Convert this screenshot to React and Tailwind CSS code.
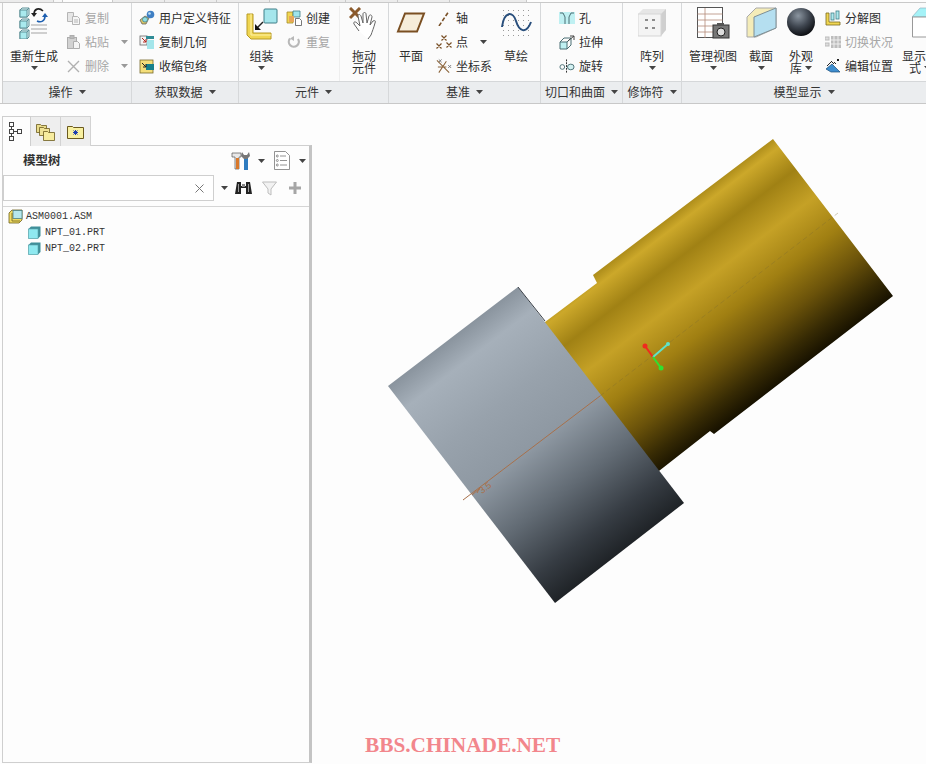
import React from 'react'

const cjk = "font-['Noto_Sans_CJK_SC','Liberation_Sans',sans-serif]"

function Caret({ color = '#444' }) {
  return (
    <svg width="7" height="4" viewBox="0 0 7 4" className="shrink-0">
      <path d="M0 0h7L3.5 4z" fill={color} />
    </svg>
  )
}

function Cube({ x = 0, y = 0, s = 9, front = '#a9eaee', edge = '#5c8f96' }) {
  const d = Math.round(s * 0.3)
  return (
    <g transform={`translate(${x} ${y})`}>
      <path d={`M${d} 0H${s + d}V${s}L${s} ${s + d}H0V${d}z`} fill="#dff7f8" stroke={edge} strokeWidth="1" />
      <rect x="0" y={d} width={s} height={s} fill={front} stroke={edge} strokeWidth="1" />
      <path d={`M${s} ${d}L${s + d} 0`} stroke={edge} strokeWidth="1" />
    </g>
  )
}

function RegenIcon() {
  return (
    <svg width="30" height="32" viewBox="0 0 30 32">
      <Cube x={1} y={1} s={7} />
      <Cube x={1} y={12} s={7} />
      <Cube x={1} y={23} s={7} />
      <path d="M24 4C20 0 15 2 15 7" fill="none" stroke="#222" strokeWidth="1.6" />
      <path d="M12 6h6l-3 4z" fill="#222" />
      <path d="M18 14c4 2 8 0 8-5" fill="none" stroke="#1d5fb0" strokeWidth="1.6" />
      <path d="M23 10h6l-3-4z" fill="#1d5fb0" />
      <path d="M12 18h16M12 22h16M12 26h16" stroke="#a3a3a3" strokeWidth="1" />
    </svg>
  )
}

function CopyIcon() {
  return (
    <svg width="15" height="15" viewBox="0 0 15 15" fill="none" stroke="#b5b5b5">
      <path d="M1.5 1.5h6v9h-6z" fill="#e6e6e6" />
      <path d="M6.5 5.5h5l2 2v6h-7z" fill="#f6f6f6" />
      <path d="M8 9h4M8 11h4" />
    </svg>
  )
}

function PasteIcon() {
  return (
    <svg width="15" height="16" viewBox="0 0 15 16" fill="none" stroke="#adadad">
      <rect x="1.5" y="3.5" width="9" height="11" fill="#d2d2d2" />
      <rect x="4" y="1.5" width="4" height="3" fill="#bbb" />
      <path d="M7.5 7.5h4l2 2v5h-6z" fill="#f4f4f4" />
    </svg>
  )
}

function DeleteIcon() {
  return (
    <svg width="15" height="15" viewBox="0 0 15 15">
      <path d="M2 2l11 11M13 2L2 13" stroke="#b0b0b0" strokeWidth="1.4" />
    </svg>
  )
}

function UdfIcon() {
  return (
    <svg width="16" height="16" viewBox="0 0 16 16">
      <path d="M1 10l5-4 4 2-3 6H3z" fill="#d8c468" stroke="#555" strokeWidth=".7" />
      <circle cx="11.5" cy="4.5" r="3.8" fill="#3f7fc4" />
      <circle cx="10.5" cy="3.5" r="1.3" fill="#bfe0f5" />
      <circle cx="6" cy="9.5" r="2.5" fill="#8fdde4" stroke="#3d7d86" strokeWidth=".7" />
    </svg>
  )
}

function CopyGeomIcon() {
  return (
    <svg width="16" height="16" viewBox="0 0 16 16">
      <rect x="1" y="2" width="7" height="9" fill="#f4f4f4" stroke="#666" strokeWidth=".8" />
      <path d="M7 2h8v3H7z" fill="#2f8c96" />
      <rect x="8" y="6" width="7" height="9" fill="#a3e5ea" />
      <path d="M3 4l4 4M7 5v3H4" stroke="#b3261e" strokeWidth="1" fill="none" />
    </svg>
  )
}

function ShrinkIcon() {
  return (
    <svg width="16" height="16" viewBox="0 0 16 16">
      <rect x="1" y="2" width="13" height="13" fill="#f4de7a" stroke="#77692a" strokeWidth=".8" />
      <rect x="7" y="6" width="8" height="6" fill="#17808c" />
      <path d="M3 5l4 4M7 6v3H4" stroke="#222" strokeWidth="1" fill="none" />
    </svg>
  )
}

function AssembleIcon() {
  return (
    <svg width="32" height="33" viewBox="0 0 32 33">
      <path d="M1 7h6v19h18v6H5l-4-4z" fill="#f0d652" stroke="#b79a24" strokeWidth="1" />
      <path d="M5 7v21h20" fill="none" stroke="#fff3a8" strokeWidth="1" />
      <rect x="18" y="2" width="13" height="14" rx="1" fill="#a5e6ec" stroke="#3f7f88" strokeWidth="1" />
      <path d="M17 15L11 21" stroke="#222" strokeWidth="1.5" />
      <path d="M9 17v6h6z" fill="#111" />
    </svg>
  )
}

function CreateIcon() {
  return (
    <svg width="16" height="16" viewBox="0 0 16 16">
      <path d="M1 2h6v11H1z" fill="#f0d652" stroke="#a48c28" strokeWidth=".8" />
      <path d="M7 1h7v6H7z" fill="#9fe4ea" stroke="#3f7f88" strokeWidth=".8" />
      <path d="M3 6h5v6H3z" fill="#e7a75a" />
      <path d="M9.5 8.5h4l2 2v5h-6z" fill="#fff" stroke="#555" strokeWidth=".8" />
    </svg>
  )
}

function RedoIcon() {
  return (
    <svg width="14" height="14" viewBox="0 0 14 14" fill="none">
      <path d="M3 3.5A5 5 0 1 0 11 4" stroke="#b8b8b8" strokeWidth="2.2" />
      <path d="M7 1v5L3 3.5z" fill="#b8b8b8" />
    </svg>
  )
}

function DragIcon() {
  return (
    <svg width="30" height="32" viewBox="0 0 30 32">
      <path d="M1 1l10 10M11 1L1 11" stroke="#8a5a2c" strokeWidth="3" />
      <path d="M10 24l-5-7c-1-2 1-3 3-1l3 3-2-10c0-2 2-2 3 0l2 7 0-9c0-2 3-2 3 0l1 9 2-7c1-2 3-1 3 1l-2 8 3-4c2-1 3 0 2 2-1 4-3 9-4 12l-3 4" fill="#fff" stroke="#666" strokeWidth="1" />
    </svg>
  )
}

function PlaneIcon() {
  return (
    <svg width="30" height="21" viewBox="0 0 30 21">
      <path d="M9 1.5h19L21 19.5H2z" fill="#f6edda" stroke="#7a4f22" strokeWidth="2" />
    </svg>
  )
}

function AxisIcon() {
  return (
    <svg width="16" height="16" viewBox="0 0 16 16">
      <path d="M3 16L13 1" stroke="#7a5128" strokeWidth="1.6" strokeDasharray="4 2" />
    </svg>
  )
}

function PointIcon() {
  const x = (a, b) => `M${a - 2.5} ${b - 2.5}l5 5m0 -5l-5 5`
  return (
    <svg width="16" height="16" viewBox="0 0 16 16">
      <path d={`${x(8, 4)} ${x(3, 12)} ${x(13, 11)}`} stroke="#7a5128" strokeWidth="1.2" fill="none" />
    </svg>
  )
}

function CsysIcon() {
  return (
    <svg width="17" height="17" viewBox="0 0 17 17" fill="none">
      <path d="M1 2l13 13M11 3L3 15M2 9h9" stroke="#8a6238" strokeWidth="1.1" />
      <path d="M13 7l3 3m0-3l-3 3M3 1l3 3m0-3L3 4" stroke="#777" strokeWidth="1" />
    </svg>
  )
}

function SketchIcon() {
  const dots = []
  for (let i = 0; i < 6; i++) for (let j = 0; j < 6; j++) dots.push(<rect key={`${i}${j}`} x={2 + i * 5} y={2 + j * 5} width="1" height="1" fill="#9a9a9a" />)
  return (
    <svg width="31" height="28" viewBox="0 0 31 28">
      {dots}
      <path d="M1 19C3 3 12 3 15 13S25 27 30 14" fill="none" stroke="#284e7c" strokeWidth="2" />
    </svg>
  )
}

function HoleIcon() {
  return (
    <svg width="16" height="13" viewBox="0 0 16 13">
      <rect x="0" y="0" width="16" height="12" fill="#bff0f2" />
      <path d="M1 1h3l2 4v7M15 1h-3l-2 4v7" fill="none" stroke="#4a6f74" strokeWidth="1" />
    </svg>
  )
}

function ExtrudeIcon() {
  return (
    <svg width="16" height="15" viewBox="0 0 16 15" fill="none">
      <path d="M1 7h7v7H1z" fill="#bff0f2" stroke="#4a6f74" />
      <path d="M1 7l4-4h7l-4 4M8 14l4-4V3" stroke="#4a6f74" />
      <path d="M9 6l6-5M11 1h4v4" stroke="#444" />
    </svg>
  )
}

function RevolveIcon() {
  return (
    <svg width="17" height="15" viewBox="0 0 17 15" fill="none">
      <path d="M8 0v15" stroke="#222" strokeDasharray="2 1" />
      <ellipse cx="3.5" cy="8" rx="2.5" ry="2.5" stroke="#4a6f74" />
      <ellipse cx="12.5" cy="8" rx="3.5" ry="3" fill="#d3f1f2" stroke="#4a6f74" />
    </svg>
  )
}

function PatternIcon() {
  return (
    <svg width="28" height="29" viewBox="0 0 28 29">
      <path d="M22 1h6v21l-5 6z" fill="#cfcfcf" />
      <path d="M5 1h23l-5 5H0z" fill="#e6e6e6" />
      <rect x="0" y="6" width="23" height="22" fill="#f4f4f4" stroke="#d5d5d5" />
      <path d="M7 12h3M14 12h3M7 20h3M14 20h3" stroke="#8b8b8b" strokeWidth="2" />
    </svg>
  )
}

function ViewManagerIcon() {
  return (
    <svg width="33" height="33" viewBox="0 0 33 33">
      <rect x=".5" y=".5" width="25" height="30" fill="#fff" stroke="#555" />
      <path d="M.5 7h25M.5 13h25M.5 19h25M.5 25h25M8 1v30" stroke="#b48a78" strokeWidth=".8" />
      <rect x="16" y="18" width="16" height="13" fill="#777" stroke="#333" />
      <rect x="20" y="16" width="7" height="3" fill="#555" />
      <circle cx="24" cy="25" r="4" fill="#ddd" stroke="#222" />
    </svg>
  )
}

function SectionIcon() {
  return (
    <svg width="31" height="31" viewBox="0 0 31 31">
      <path d="M1 10L10 1h20v20L10 30H1z" fill="#f4ecb8" stroke="#a9a9a9" />
      <path d="M8 10L30 1v20L8 30z" fill="#b5dff0" stroke="#7d8e96" />
    </svg>
  )
}

function SphereIcon() {
  return (
    <svg width="28" height="28" viewBox="0 0 28 28">
      <defs>
        <radialGradient id="sph" cx=".4" cy=".28" r=".72">
          <stop offset="0" stopColor="#8b95a0" />
          <stop offset=".55" stopColor="#3f4650" />
          <stop offset="1" stopColor="#0e1014" />
        </radialGradient>
      </defs>
      <circle cx="14" cy="14" r="14" fill="url(#sph)" />
    </svg>
  )
}

function ExplodeIcon() {
  return (
    <svg width="16" height="16" viewBox="0 0 16 16">
      <path d="M1 3h3v9h11v3H1z" fill="#f0d652" stroke="#7a6b20" strokeWidth=".8" />
      <rect x="6" y="3" width="3" height="7" fill="#aee9ee" stroke="#3f7f88" strokeWidth=".8" />
      <rect x="11" y="1" width="3" height="8" fill="#aee9ee" stroke="#3f7f88" strokeWidth=".8" />
    </svg>
  )
}

function SwitchStateIcon() {
  return (
    <svg width="16" height="13" viewBox="0 0 16 13">
      <rect x="0" y="1" width="4" height="3" fill="#ddd" stroke="#bbb" />
      <rect x="0" y="7" width="4" height="3" fill="#ddd" stroke="#bbb" />
      <rect x="6" y="0" width="10" height="12" fill="#bdbdbd" />
      <path d="M6 4h10M6 8h10M9 0v12M13 0v12" stroke="#eee" />
    </svg>
  )
}

function EditPosIcon() {
  return (
    <svg width="16" height="16" viewBox="0 0 16 16" fill="none">
      <path d="M1 11l6-5 8 8H6z" fill="#3f8ecf" stroke="#1c4f7a" strokeWidth=".7" />
      <path d="M2 8l5-5M6 3l3 3M12 1l2 2m0-2l-2 2M9 4l2 2" stroke="#222" />
    </svg>
  )
}

function DisplayStyleIcon() {
  return (
    <svg width="26" height="31" viewBox="0 0 26 31">
      <path d="M0 10L8 1h18v9z" fill="#a5f2f7" stroke="#8ab" strokeWidth=".6" />
      <path d="M.5 10v20h25V10z" fill="#fff" stroke="#999" />
    </svg>
  )
}

function SmallTool({ icon, label, arrow, disabled }) {
  return (
    <div className="flex items-center h-[24px] gap-[4px] whitespace-nowrap">
      <span className="w-[16px] h-[16px] flex items-center justify-center shrink-0">{icon}</span>
      <span className={disabled ? 'text-[#a6a6a6]' : 'text-[#2e2e2e]'}>{label}</span>
      {arrow && <span className="ml-[8px]"><Caret color={disabled ? '#999' : '#444'} /></span>}
    </div>
  )
}

function LargeTool({ icon, lines, arrow, inlineArrow, className = '', iconTop = 'pt-[1px]' }) {
  return (
    <div className={`flex flex-col items-center shrink-0 ${className}`}>
      <div className={`h-[44px] flex justify-center items-start ${iconTop}`}>{icon}</div>
      {lines.map((t, i) => (
        <div key={t} className="h-[12px] leading-[12px] whitespace-nowrap flex items-center gap-[3px] text-[#2e2e2e]">
          {t}
          {inlineArrow && i === lines.length - 1 && <Caret />}
        </div>
      ))}
      {arrow && <div className="mt-[4px]"><Caret /></div>}
    </div>
  )
}

function Group({ title, width, children, className = '' }) {
  return (
    <section className={`${width} shrink-0 flex flex-col border-r border-[#d6d8da] last:border-r-0`}>
      <div className={`h-[78px] pt-[3px] flex overflow-hidden ${className}`}>{children}</div>
      <div className="h-[22px] pb-[2px] flex items-center justify-center gap-[6px] bg-[#ebedef] border-t border-[#d5d7d9] text-[#333]">
        {title}
        <Caret />
      </div>
    </section>
  )
}

function TopTabs() {
  const tabs = [
    ['w-[54px]', 'bg-[#ececec]'],
    ['w-[9px]', 'bg-[#f8f8f8]'],
    ['w-[50px]', 'bg-[#fdfdfd]'],
    ['w-[52px]', 'bg-[#ececec]'],
    ['w-[52px]', 'bg-[#ececec]'],
    ['w-[53px]', 'bg-[#ececec]'],
    ['w-[76px]', 'bg-[#ececec]'],
    ['w-[52px]', 'bg-[#ececec]'],
    ['w-[52px]', 'bg-[#ececec]'],
    ['w-[77px]', 'bg-[#ececec]'],
  ]
  return (
    <div className="h-[3px] flex shrink-0 border-b border-[#c9c9c9]">
      {tabs.map(([w, bg], i) => (
        <div key={i} className={`${w} ${bg} border-r border-[#c9c9c9]`} />
      ))}
    </div>
  )
}

function Ribbon() {
  return (
    <div className="pl-[2px] bg-[#fbfbfb] border-b border-[#c8c8c8] shrink-0">
      <div className="flex border-l border-[#cfcfcf] w-[924px] overflow-hidden">
        <Group title="操作" width="w-[129px]">
          <LargeTool className="w-[62px]" icon={<RegenIcon />} lines={['重新生成']} arrow />
          <div>
            <SmallTool disabled icon={<CopyIcon />} label="复制" />
            <SmallTool disabled arrow icon={<PasteIcon />} label="粘贴" />
            <SmallTool disabled arrow icon={<DeleteIcon />} label="删除" />
          </div>
        </Group>
        <Group title="获取数据" width="w-[107px]" className="pl-[7px]">
          <div>
            <SmallTool icon={<UdfIcon />} label="用户定义特征" />
            <SmallTool icon={<CopyGeomIcon />} label="复制几何" />
            <SmallTool icon={<ShrinkIcon />} label="收缩包络" />
          </div>
        </Group>
        <Group title="元件" width="w-[150px]">
          <LargeTool className="w-[45px]" icon={<AssembleIcon />} lines={['组装']} arrow />
          <div className="ml-[2px]">
            <SmallTool icon={<CreateIcon />} label="创建" />
            <SmallTool disabled icon={<RedoIcon />} label="重复" />
          </div>
          <div className="ml-auto w-[49px] border-l border-[#eeeeee] flex justify-center">
            <LargeTool icon={<DragIcon />} lines={['拖动', '元件']} />
          </div>
        </Group>
        <Group title="基准" width="w-[152px]">
          <LargeTool className="w-[44px]" icon={<PlaneIcon />} lines={['平面']} iconTop="pt-[6px]" />
          <div className="ml-[3px]">
            <SmallTool icon={<AxisIcon />} label="轴" />
            <SmallTool arrow icon={<PointIcon />} label="点" />
            <SmallTool icon={<CsysIcon />} label="坐标系" />
          </div>
          <LargeTool className="ml-auto w-[48px]" icon={<SketchIcon />} lines={['草绘']} iconTop="pt-[2px]" />
        </Group>
        <Group title="切口和曲面" width="w-[82px]" className="pl-[18px]">
          <div>
            <SmallTool icon={<HoleIcon />} label="孔" />
            <SmallTool icon={<ExtrudeIcon />} label="拉伸" />
            <SmallTool icon={<RevolveIcon />} label="旋转" />
          </div>
        </Group>
        <Group title="修饰符" width="w-[59px]">
          <LargeTool className="w-full" icon={<PatternIcon />} lines={['阵列']} arrow iconTop="pt-[2px]" />
        </Group>
        <Group title="模型显示" width="w-[244px]">
          <LargeTool className="w-[62px]" icon={<ViewManagerIcon />} lines={['管理视图']} arrow />
          <LargeTool className="w-[34px]" icon={<SectionIcon />} lines={['截面']} arrow />
          <LargeTool className="w-[46px]" icon={<SphereIcon />} lines={['外观', '库']} inlineArrow iconTop="pt-[2px]" />
          <div className="ml-[1px] shrink-0">
            <SmallTool icon={<ExplodeIcon />} label="分解图" />
            <SmallTool disabled icon={<SwitchStateIcon />} label="切换状况" />
            <SmallTool icon={<EditPosIcon />} label="编辑位置" />
          </div>
          <LargeTool className="ml-[9px] w-[36px]" icon={<DisplayStyleIcon />} lines={['显示样', '式']} inlineArrow iconTop="pt-[1px] pl-[10px]" />
        </Group>
      </div>
    </div>
  )
}

function TreeTabIcon() {
  return (
    <svg width="14" height="19" viewBox="0 0 14 19" fill="none" stroke="#444">
      <rect x="1.5" y=".5" width="4" height="4" />
      <rect x="1.5" y="7.5" width="4" height="4" />
      <rect x="1.5" y="14.5" width="4" height="4" />
      <rect x="9.5" y="7.5" width="4" height="4" />
      <path d="M3.5 4.5v3M3.5 11.5v3M5.5 9.5h4" />
    </svg>
  )
}

function FoldersIcon() {
  return (
    <svg width="19" height="19" viewBox="0 0 19 19" stroke="#6b5a1e" strokeWidth=".8">
      <path d="M.5 2.5h4l1 1h5v7h-10z" fill="#e9dc8a" />
      <path d="M3.5 5.5h4l1 1h5v7h-10z" fill="#efe296" />
      <path d="M7.5 9.5h4l1 1h6v8h-11z" fill="#f7ec9e" />
    </svg>
  )
}

function FavFolderIcon() {
  return (
    <svg width="17" height="14" viewBox="0 0 17 14">
      <path d="M.5 1.5h5l1 1h10v11H.5z" fill="#f8f0a0" stroke="#6b5a1e" />
      <path d="M8.5 5v5M6 7.5h5M6.5 5.5l4 4M10.5 5.5l-4 4" stroke="#1f3fb0" strokeWidth="1" />
    </svg>
  )
}

function ToolsIcon() {
  return (
    <svg width="20" height="19" viewBox="0 0 20 19">
      <path d="M1 2h9v4H8v12H4V6H1z" fill="#e8e8e8" stroke="#555" strokeWidth=".7" />
      <rect x="5" y="7" width="3" height="11" fill="#d9782a" />
      <path d="M13 7h4v12h-4z" fill="#2f7cc0" />
      <path d="M11 1l2 3h3l2-3 1 4-3 3h-3l-3-3z" fill="#777" />
    </svg>
  )
}

function ListIcon() {
  return (
    <svg width="16" height="19" viewBox="0 0 16 19" fill="#fff" stroke="#777" strokeWidth=".8">
      <path d="M.5.5h11l4 4v14H.5z" />
      <path d="M6 5h6M6 9.5h7M6 14h7" />
      <circle cx="3.3" cy="5" r="1" />
      <circle cx="3.3" cy="9.5" r="1" />
      <circle cx="3.3" cy="14" r="1" />
    </svg>
  )
}

function BinocularsIcon() {
  return (
    <svg width="17" height="15" viewBox="0 0 17 15" fill="#222">
      <path d="M2 1h4v4h5V1h4l2 12h-6V7H6v6H0z" />
      <rect x="7" y="3" width="3" height="3" fill="#888" />
      <rect x="3" y="3" width="1" height="8" fill="#999" />
      <rect x="13" y="3" width="1" height="8" fill="#999" />
    </svg>
  )
}

function FilterIcon() {
  return (
    <svg width="15" height="15" viewBox="0 0 15 15">
      <path d="M.5 1h14L9 8v6l-3-2V8z" fill="#f2f2f2" stroke="#bdbdbd" />
    </svg>
  )
}

function PlusIcon() {
  return (
    <svg width="12" height="12" viewBox="0 0 12 12">
      <path d="M4.5 0h3v4.5H12v3H7.5V12h-3V7.5H0v-3h4.5z" fill="#a6a6a6" />
    </svg>
  )
}

function AsmIcon() {
  return (
    <svg width="15" height="15" viewBox="0 0 15 15">
      <path d="M1 4l3-3h10v10l-3 3H1z" fill="#f1dc62" stroke="#6d6020" strokeWidth=".8" />
      <rect x="5" y="1.5" width="9" height="8" fill="#b6e8ec" stroke="#4a7f86" strokeWidth=".8" />
      <path d="M4 4v8h8" fill="none" stroke="#6d6020" strokeWidth=".8" />
    </svg>
  )
}

function PartIcon() {
  return (
    <svg width="13" height="13" viewBox="0 0 13 13">
      <path d="M3 .5h9.5V10L10 12.5H.5V3z" fill="#3f8f99" />
      <rect x=".5" y="3" width="9.5" height="9.5" fill="#8fe9f0" stroke="#5aa3ab" strokeWidth=".6" />
    </svg>
  )
}

function TreeRow({ icon, label, indent }) {
  return (
    <div className={`h-[16px] flex items-center ${indent ? 'pl-[25px] gap-[4px]' : 'pl-[5px] gap-[3px]'}`}>
      {icon}
      <span className="font-['Liberation_Mono',monospace] text-[10px] text-[#333]">{label}</span>
    </div>
  )
}

function SidePanel() {
  return (
    <aside className="w-[312px] shrink-0 flex flex-col pl-[2px] pt-[12px] pb-px">
      <div className="flex h-[30px] -mb-px relative">
        <div className="w-[29px] bg-[#fdfdfd] border border-b-0 border-[#cfcfcf] flex items-center justify-center pr-[3px]"><TreeTabIcon /></div>
        <div className="w-[30px] bg-[#eeeeee] border-t border-r border-[#d3d3d3] flex items-center justify-center"><FoldersIcon /></div>
        <div className="w-[30px] bg-[#eeeeee] border-t border-r border-[#d3d3d3] flex items-center justify-center"><FavFolderIcon /></div>
      </div>
      <div className="flex-1 border-l border-b border-t border-[#cfcfcf] border-r-[3px] border-r-[#c4c4c4] bg-[#fdfdfd]">
        <div className="h-[29px] flex items-center">
          <span className="ml-[20px] text-[12.5px] font-bold text-[#333]">模型树</span>
          <span className="ml-auto"><ToolsIcon /></span>
          <span className="ml-[7px]"><Caret /></span>
          <span className="ml-[9px]"><ListIcon /></span>
          <span className="ml-[9px] mr-[3px]"><Caret /></span>
        </div>
        <div className="flex items-center h-[26px]">
          <div className="w-[211px] h-full bg-white border border-[#cfcfcf] flex items-center justify-end pr-[9px]">
            <svg width="9" height="9" viewBox="0 0 9 9"><path d="M.5.5l8 8m0-8l-8 8" stroke="#777" /></svg>
          </div>
          <span className="ml-[7px]"><Caret /></span>
          <span className="ml-[7px]"><BinocularsIcon /></span>
          <span className="ml-[10px]"><FilterIcon /></span>
          <span className="ml-[12px]"><PlusIcon /></span>
        </div>
        <div className="mt-[5px] border-t border-[#d5d5d5] pt-[1px]">
          <TreeRow icon={<AsmIcon />} label="ASM0001.ASM" />
          <TreeRow indent icon={<PartIcon />} label="NPT_01.PRT" />
          <TreeRow indent icon={<PartIcon />} label="NPT_02.PRT" />
        </div>
      </div>
    </aside>
  )
}

function ModelView() {
  return (
    <svg width="614" height="660" viewBox="312 104 614 660" className="block">
      <defs>
        <linearGradient id="gold" gradientUnits="userSpaceOnUse" x1="773" y1="139" x2="893" y2="296">
          <stop offset="0" stopColor="#b08f1c" />
          <stop offset=".05" stopColor="#cca82a" />
          <stop offset=".19" stopColor="#a08114" />
          <stop offset=".36" stopColor="#c5a126" />
          <stop offset=".56" stopColor="#a07f12" />
          <stop offset=".75" stopColor="#6a520a" />
          <stop offset=".9" stopColor="#362a04" />
          <stop offset="1" stopColor="#181200" />
        </linearGradient>
        <linearGradient id="steel" gradientUnits="userSpaceOnUse" x1="518" y1="287" x2="684" y2="503">
          <stop offset="0" stopColor="#8a949e" />
          <stop offset=".1" stopColor="#a6b0ba" />
          <stop offset=".3" stopColor="#98a2ac" />
          <stop offset=".5" stopColor="#8e98a2" />
          <stop offset=".7" stopColor="#616a73" />
          <stop offset=".88" stopColor="#363c43" />
          <stop offset="1" stopColor="#1f2327" />
        </linearGradient>
      </defs>
      <path d="M525 337L597 283L593 275L773 139L893 296L714 434L710 431L650 478z" fill="url(#gold)" />
      <path d="M518 287L388 386L555 603L684 503z" fill="url(#steel)" />
      <path d="M518 287L545 321" stroke="#3a4048" strokeWidth="1" />
      <path d="M463 500L600 396" stroke="#a8704a" strokeWidth="1" />
      <path d="M600 396L838 213" stroke="#7a6a30" strokeWidth=".7" strokeDasharray="5 3" strokeOpacity=".5" />
      <path d="M472 495l8-7M477 493l3-6" stroke="#a8704a" strokeWidth="1" />
      <text x="482" y="494" fontSize="9" fill="#a8704a" fontFamily="Liberation Sans" transform="rotate(-37 482 494)">3.5</text>
      <path d="M653 357L645 346" stroke="#f02a1e" strokeWidth="2" />
      <circle cx="645" cy="346" r="2.5" fill="#f02a1e" />
      <path d="M653 357L668 344" stroke="#5fe3c8" strokeWidth="2" />
      <circle cx="668" cy="344" r="2" fill="#5fe3c8" />
      <path d="M653 357L661 368" stroke="#30e030" strokeWidth="2" />
      <circle cx="661" cy="368" r="2.5" fill="#30e030" />
    </svg>
  )
}

export default function App() {
  return (
    <div className={`relative w-[926px] h-[764px] overflow-hidden bg-[#fdfdfd] text-[12px] flex flex-col ${cjk}`}>
      <TopTabs />
      <Ribbon />
      <div className="flex flex-1 min-h-0">
        <SidePanel />
        <main className="relative flex-1">
          <ModelView />
          <span className="absolute left-[53px] bottom-[7px] font-['Liberation_Serif',serif] font-bold text-[21.3px] leading-[24px] text-[#f2868c] whitespace-nowrap">
            BBS.CHINADE.NET
          </span>
        </main>
      </div>
    </div>
  )
}
